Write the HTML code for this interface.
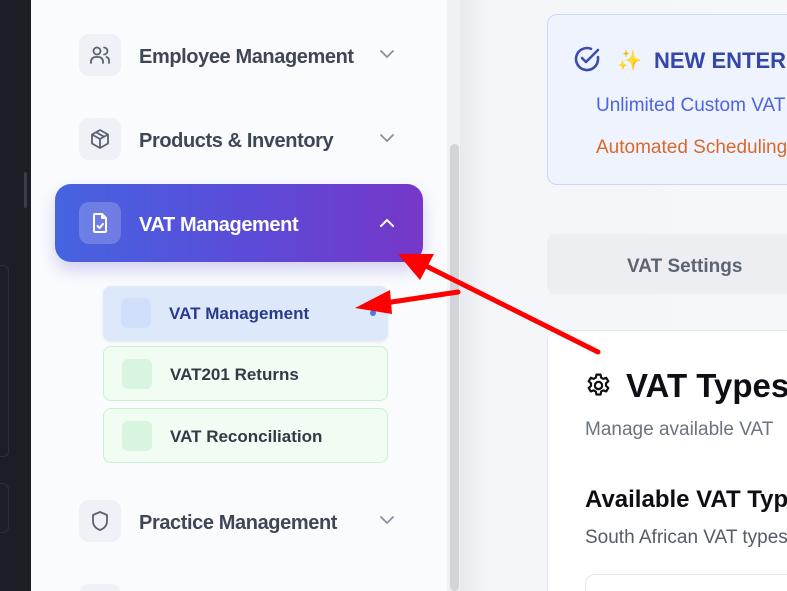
<!DOCTYPE html>
<html><head><style>
*{margin:0;padding:0;box-sizing:border-box}
html,body{width:787px;height:591px;overflow:hidden}
body{position:relative;font-family:"Liberation Sans",sans-serif;background:#f5f7fa}
#w{position:absolute;left:0;top:0;width:787px;height:591px;overflow:hidden}
.a{position:absolute}
.dark{left:0;top:0;width:31px;height:591px;background:#1c1e25}
.side{left:31px;top:0;width:416px;height:591px;background:#fafbfd}
.track{left:447px;top:0;width:13px;height:591px;background:#f0f1f3}
.thumb{left:450px;top:144px;width:9px;height:447px;background:#d2d4d9;border-radius:5px}
.main{left:460px;top:0;width:327px;height:591px;background:linear-gradient(90deg,#e8eaee 0,#f4f6f9 30px,#f5f7fa 100%)}
.ib{width:42px;height:42px;border-radius:10px;background:#eef1f6;display:flex;align-items:center;justify-content:center}
.lbl{font-size:20px;color:#3f4656;font-weight:bold;letter-spacing:-0.4px}
.sub{left:103px;width:285px;height:55px;border-radius:8px}
.sq{position:absolute;left:18px;top:12px;width:30px;height:30px;border-radius:6px}
.st{position:absolute;left:66px;top:18px;font-size:17px;font-weight:bold}
.nw{white-space:nowrap}
</style></head><body><div id="w">
<div class="a dark"></div>
<div class="a" style="left:0;top:265px;width:9px;height:192px;border:1px solid #2c2f37;border-left:none;border-radius:0 6px 6px 0"></div>
<div class="a" style="left:0;top:483px;width:9px;height:50px;border:1px solid #2c2f37;border-left:none;border-radius:0 6px 6px 0"></div>
<div class="a" style="left:24px;top:172px;width:3px;height:36px;background:#3a3d45;border-radius:2px"></div>
<div class="a side"></div>
<div class="a track"></div>
<div class="a thumb"></div>
<div class="a main"></div>

<div class="a ib" style="left:79px;top:34px"><svg width="24" height="24" viewBox="0 0 24 24" fill="none" stroke="#5a6272" stroke-width="1.8" stroke-linecap="round"><circle cx="9" cy="8" r="3.5"/><path d="M3 20v-1.5A4.5 4.5 0 0 1 7.5 14h3a4.5 4.5 0 0 1 4.5 4.5V20M16 4.5a3.5 3.5 0 0 1 0 7M18.5 14a4 4 0 0 1 2.5 4V20"/></svg></div>
<div class="a lbl nw" style="left:139px;top:46px">Employee Management</div>
<svg class="a" style="left:378px;top:48px" width="18" height="12" viewBox="0 0 18 12" fill="none" stroke="#8a91a0" stroke-width="1.8" stroke-linecap="round"><path d="M3 3l6 6 6-6"/></svg>

<div class="a ib" style="left:79px;top:118px"><svg width="24" height="24" viewBox="0 0 24 24" fill="none" stroke="#5a6272" stroke-width="1.8" stroke-linejoin="round"><path d="M12 3l8 4.5v9L12 21l-8-4.5v-9z"/><path d="M4 7.5l8 4.5 8-4.5M12 12v9M8 5.2l8 4.5"/></svg></div>
<div class="a lbl nw" style="left:139px;top:130px">Products &amp; Inventory</div>
<svg class="a" style="left:378px;top:132px" width="18" height="12" viewBox="0 0 18 12" fill="none" stroke="#8a91a0" stroke-width="1.8" stroke-linecap="round"><path d="M3 3l6 6 6-6"/></svg>

<div class="a" style="left:55px;top:184px;width:368px;height:78px;border-radius:16px;background:linear-gradient(90deg,#4564e0,#5a4cd9 50%,#7637c8);box-shadow:0 8px 16px rgba(90,80,220,.25)"></div>
<div class="a ib" style="left:79px;top:202px;background:rgba(255,255,255,.2)"><svg width="24" height="24" viewBox="0 0 24 24" fill="none" stroke="#fff" stroke-width="2" stroke-linejoin="round" stroke-linecap="round"><path d="M14 3H7a1 1 0 0 0-1 1v16a1 1 0 0 0 1 1h10a1 1 0 0 0 1-1V7z"/><path d="M14 3v4h4M9.5 15l2 2 3.5-4"/></svg></div>
<div class="a lbl nw" style="left:139px;top:214px;color:#fff">VAT Management</div>
<svg class="a" style="left:378px;top:217px" width="18" height="12" viewBox="0 0 18 12" fill="none" stroke="#fff" stroke-width="2" stroke-linecap="round"><path d="M3 9l6-6 6 6"/></svg>

<div class="a sub" style="top:286px;background:#dde8fb;box-shadow:0 1px 3px rgba(0,0,0,.08)"><div class="sq" style="background:#d1e0fa"></div><div class="st" style="color:#2b3b8c">VAT Management</div><div style="position:absolute;left:267px;top:24px;width:6px;height:6px;border-radius:3px;background:#4a78e6"></div></div>
<div class="a sub" style="top:346px;background:#f1fcf3;border:1px solid #c8f0d2"><div class="sq" style="background:#d8f5df"></div><div class="st" style="color:#333a46">VAT201 Returns</div></div>
<div class="a sub" style="top:408px;background:#f1fcf3;border:1px solid #c8f0d2"><div class="sq" style="background:#d8f5df"></div><div class="st" style="color:#333a46">VAT Reconciliation</div></div>

<div class="a ib" style="left:79px;top:500px"><svg width="24" height="24" viewBox="0 0 24 24" fill="none" stroke="#5a6272" stroke-width="1.8" stroke-linejoin="round"><path d="M12 3l7 3v6c0 4.5-3 7.5-7 9-4-1.5-7-4.5-7-9V6z"/></svg></div>
<div class="a lbl nw" style="left:139px;top:512px">Practice Management</div>
<svg class="a" style="left:378px;top:514px" width="18" height="12" viewBox="0 0 18 12" fill="none" stroke="#8a91a0" stroke-width="1.8" stroke-linecap="round"><path d="M3 3l6 6 6-6"/></svg>
<div class="a" style="left:79px;top:584px;width:42px;height:20px;border-radius:10px;background:#eef1f6"></div>

<div class="a" style="left:547px;top:14px;width:260px;height:171px;border:1px solid #c9d8f6;border-radius:10px;background:#eef3fd"></div>
<svg class="a" style="left:572px;top:44px" width="30" height="30" viewBox="0 0 30 30" fill="none" stroke="#3c4db0" stroke-width="2.6" stroke-linecap="round" stroke-linejoin="round"><path d="M26 13v2A11 11 0 1 1 19 4.8"/><path d="M10 14l4 4 12-12"/></svg>
<div class="a" style="left:617px;top:48px;font-size:20px;color:#f0a53a">✨</div>
<div class="a nw" style="left:654px;top:48px;font-size:22px;font-weight:bold;color:#3446a8">NEW ENTERPRISE</div>
<div class="a nw" style="left:596px;top:95px;font-size:19px;color:#4d63e0">Unlimited Custom VAT</div>
<div class="a nw" style="left:596px;top:137px;font-size:19px;color:#d9692a">Automated Scheduling</div>

<div class="a" style="left:547px;top:234px;width:260px;height:60px;border-radius:8px;background:#eceef1"></div>
<div class="a nw" style="left:627px;top:256px;font-size:19px;font-weight:bold;color:#5d6573">VAT Settings</div>

<div class="a" style="left:547px;top:330px;width:260px;height:270px;border:1px solid #e3e6eb;border-radius:10px;background:#fff"></div>
<svg class="a" style="left:584px;top:371px" width="29" height="29" viewBox="0 0 24 24" fill="none" stroke="#111" stroke-width="1.8" stroke-linejoin="round"><path d="M10.3 3h3.4l.5 2.5 1.8 1 2.4-.9 1.7 2.9-1.9 1.7v2.1l1.9 1.7-1.7 2.9-2.4-.9-1.8 1-.5 2.5h-3.4l-.5-2.5-1.8-1-2.4.9-1.7-2.9 1.9-1.7V10.2L3.9 8.5l1.7-2.9 2.4.9 1.8-1z"/><circle cx="12" cy="12" r="3"/></svg>
<div class="a nw" style="left:626px;top:367px;font-size:33px;font-weight:bold;color:#0d0f14">VAT Types</div>
<div class="a nw" style="left:585px;top:419px;font-size:19px;color:#6b7280">Manage available VAT</div>
<div class="a nw" style="left:585px;top:486px;font-size:24px;font-weight:bold;color:#0d0f14">Available VAT Types</div>
<div class="a nw" style="left:585px;top:527px;font-size:19px;color:#555c68">South African VAT types</div>
<div class="a" style="left:585px;top:574px;width:220px;height:40px;border:1px solid #e3e6eb;border-radius:10px;background:#fff"></div>

<svg class="a" style="left:0;top:0" width="787" height="591" viewBox="0 0 787 591"><g stroke="#f00" stroke-width="5" stroke-linecap="round"><line x1="598" y1="352" x2="420" y2="263"/><line x1="458" y1="292" x2="385" y2="303"/></g><polygon points="398,254 434,254 420,280" fill="#f00"/><polygon points="355,308 390,290 392,314" fill="#f00"/></svg>
</div></body></html>
